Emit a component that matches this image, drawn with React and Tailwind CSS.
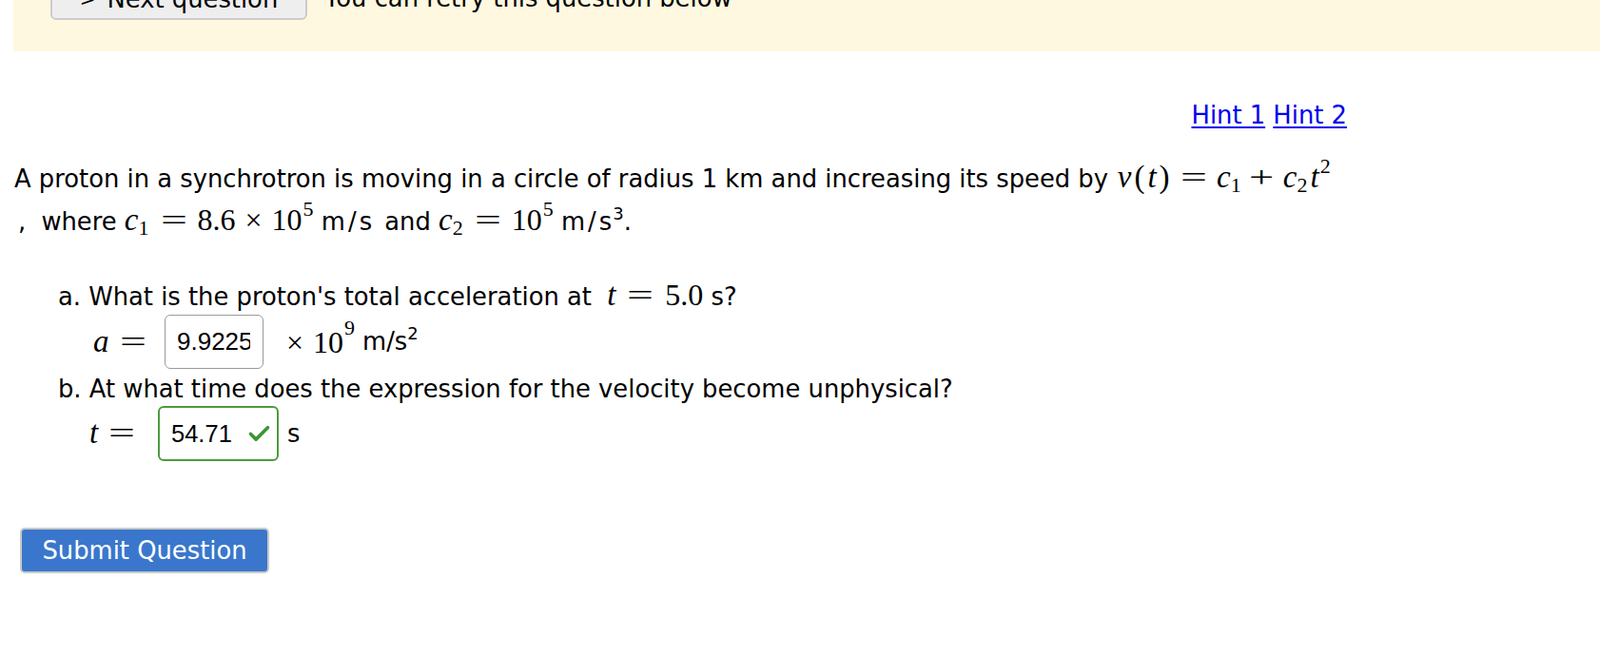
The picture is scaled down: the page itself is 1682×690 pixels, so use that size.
import { Check } from 'lucide-react'

// math pieces, roughly TeX-looking
function Mv({ children, pad = true, className = '' }) {
  return (
    <span className={`font-['Liberation_Serif',serif] italic text-[33px] ${pad ? 'px-[1.5px]' : ''} ${className}`}>
      {children}
    </span>
  )
}

function Mn({ children, className = '' }) {
  return <span className={`font-['Liberation_Serif',serif] text-[32px] ${className}`}>{children}</span>
}

function Paren({ children }) {
  return <span className="font-['Liberation_Serif',serif] text-[33px] px-[1.5px]">{children}</span>
}

// relation / binary op, widened to look like Computer Modern
function Rel({ children, scale = 'scale-x-[1.55]', gap = 'mx-[15px]' }) {
  return (
    <span className={`inline-block font-['Liberation_Serif',serif] text-[32px] ${scale} ${gap}`}>
      {children}
    </span>
  )
}

function Times() {
  return <span className="font-['Liberation_Serif',serif] text-[32px] mx-[10px]">×</span>
}

function Sub({ children }) {
  return <sub className="font-['Liberation_Serif',serif] text-[22px] not-italic relative bottom-[-5px] align-baseline pr-[3px]">{children}</sub>
}

function Sup({ children }) {
  return <sup className="font-['Liberation_Serif',serif] text-[22px] not-italic relative top-[-15px] align-baseline ml-[1px]">{children}</sup>
}

function C({ n }) {
  return (
    <span className="whitespace-nowrap">
      <Mv pad={false}>c</Mv>
      <Sub>{n}</Sub>
    </span>
  )
}

function Unit({ sup }) {
  return (
    <span>
      <span className="tracking-[3px]">m/</span>s
      {sup && <sup className="text-[18px] relative top-[-11px] align-baseline ml-[1px]">{sup}</sup>}
    </span>
  )
}

export default function App() {
  return (
    <div className="min-h-[690px] bg-white text-black font-['DejaVu_Sans',sans-serif] text-[25.8px]">
      {/* retry banner, scrolled partly out of view */}
      <div className="ml-[14px] h-[54px] bg-[#fff8e0] overflow-hidden">
        <div className="flex items-start pl-[39px]">
          <button className="-mt-[29px] h-[50px] w-[270px] flex items-end justify-center pb-[5px] bg-[#eeeeee] border-2 border-[#cccccc] rounded-[6px] leading-[30px]">
            <span className="mr-[12px] text-[20px]">&gt;</span>Next question
          </button>
          <span className="ml-[18px] -mt-[17px] leading-[30px]">You can retry this question below</span>
        </div>
      </div>

      <div className="pl-[15px] w-[1600px]">
        <div className="mt-[53px] w-[1401px] text-right leading-[28px]">
          <a href="#" className="text-[#0000ee] underline underline-offset-[3px]">Hint 1</a>{' '}
          <a href="#" className="text-[#0000ee] underline underline-offset-[3px]">Hint 2</a>
        </div>

        <p className="mt-[30px] leading-[43px]">
          A proton in a synchrotron is moving in a circle of radius 1 km and increasing its speed by{' '}
          <span className="whitespace-nowrap">
            <Mv>v</Mv>
            <Paren>(</Paren>
            <Mv>t</Mv>
            <Paren>)</Paren>
            <Rel>=</Rel>
            <C n="1" />
            <Rel scale="scale-x-[1.45]" gap="ml-[9px] mr-[14px]">+</Rel>
            <C n="2" />
            <Mv pad={false}>t</Mv>
            <Sup>2</Sup>
          </span>
          <br />
          <span className="ml-[4px]">,</span> <span className="ml-[8px]">where</span> <C n="1" />
          <Rel gap="ml-[14px] mr-[16px]">=</Rel>
          <Mn>8.6</Mn>
          <Times />
          <Mn>10</Mn>
          <Sup>5</Sup> <Unit />{' '}
          <span className="ml-[5px]">and</span> <C n="2" />
          <Rel gap="ml-[14px] mr-[16px]">=</Rel>
          <Mn>10</Mn>
          <Sup>5</Sup> <Unit sup="3" />.
        </p>

        <div className="ml-[46px] mt-[41px]">
          <div className="leading-[28px]">
            a. What is the proton's total acceleration at <Mv pad={false} className="ml-[8px]">t</Mv>
            <Rel gap="mx-[17px]">=</Rel>
            <Mn>5.0</Mn> s?
          </div>
          <div className="mt-[5px] flex items-center h-[57px]">
            <span className="ml-[37px] w-[75px] whitespace-nowrap">
              <Mv pad={false}>a</Mv>
              <Rel gap="ml-[16px]">=</Rel>
            </span>
            <input
              readOnly
              value="9.9225"
              className="h-[57px] w-[104px] pl-[12px] pr-[13px] border-[1.5px] border-[#9a9a9a] rounded-[6px] font-['Liberation_Sans',sans-serif] text-[26px] outline-none"
            />
            <span className="ml-[14px]">
              <Times />
            </span>
            <Mn>10</Mn>
            <Sup>9</Sup>
            <span className="ml-[8px]">
              m/s<sup className="text-[18px] relative top-[-11px] align-baseline">2</sup>
            </span>
          </div>

          <div className="mt-[7px] leading-[28px]">
            b. At what time does the expression for the velocity become unphysical?
          </div>
          <div className="mt-[4px] flex items-center h-[58px]">
            <span className="ml-[33px] w-[72px] whitespace-nowrap">
              <Mv pad={false}>t</Mv>
              <Rel gap="ml-[16px]">=</Rel>
            </span>
            <div className="h-[58px] w-[127px] flex items-center pl-[12px] pr-[5px] border-2 border-[#4c9a3e] rounded-[6px]">
              <span className="font-['Liberation_Sans',sans-serif] text-[25.5px] flex-1">54.71</span>
              <Check className="w-[27px] h-[27px] text-[#3d9437]" strokeWidth={3.2} />
            </div>
            <span className="ml-[9px]">s</span>
          </div>
        </div>

        <button className="ml-[6px] mt-[70px] h-[48px] w-[262px] bg-[#3a77cc] border-2 border-[#c8c8c8] rounded-[5px] text-white leading-[30px]">
          Submit Question
        </button>
      </div>
    </div>
  )
}
